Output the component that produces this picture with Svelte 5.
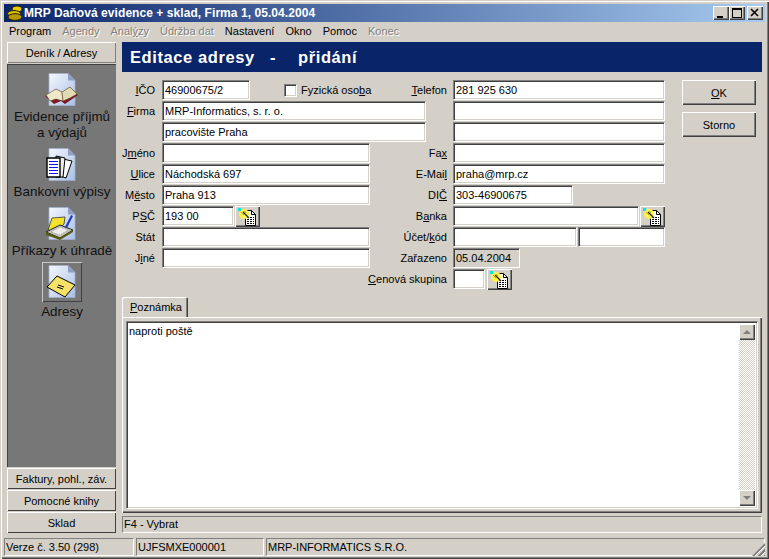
<script>
  const menu = [
    { pre: 'Program', on: true },
    { pre: 'A', u: 'g', post: 'endy' },
    { pre: 'Anal', u: 'ý', post: 'zy' },
    { pre: 'Údržba dat' },
    { pre: 'Nastavení', on: true },
    { pre: 'Okno', on: true },
    { pre: 'Pomoc', on: true },
    { pre: 'Konec' }
  ];
  const bottomTabs = ['Faktury, pohl., záv.', 'Pomocné knihy', 'Sklad'];
</script>

{#snippet doc()}
  <path d="M5 .5h19l7 7v25H5z" fill="url(#docfill)" stroke="#9fb0cc" stroke-width=".8" />
  <path d="M24 .5v7h7z" fill="#8fa0c4" />
{/snippet}

{#snippet docGrad()}
  <defs>
    <linearGradient id="docfill" x1="0" y1="0" x2="1" y2="1">
      <stop offset="0" stop-color="#f4f8fe" />
      <stop offset="1" stop-color="#a9bfe6" />
    </linearGradient>
  </defs>
{/snippet}

{#snippet lookup()}
  <svg width="19" height="18" viewBox="0 0 19 18">
    <path d="M7.500 2.500h6l4 4v11h-10z" fill="#fff" stroke="#000" />
    <path d="M13.500 2.500v4h4" fill="none" stroke="#000" />
    <path d="M9 9.500h7M9 11.500h7M9 13.500h7M9 15.500h7" stroke="#000" stroke-dasharray="2 1" />
    <circle cx="6" cy="6" r="5" fill="#fff24a" />
    <path d="M0 0h3v3H0z" fill="#00e8e8" />
    <path d="M3 4l3 3M6 3l2 2" stroke="#b0a820" />
    <path d="M5 4l6 6" stroke="#222" stroke-width="1.200" />
  </svg>
{/snippet}

<div class="window">
  <div class="titlebar">
    <svg class="appicon" width="16" height="16" viewBox="0 0 16 16">
      <ellipse cx="10" cy="4" rx="5" ry="3" fill="#e8cc00" stroke="#2a2400" />
      <ellipse cx="7" cy="8.500" rx="6.500" ry="3" fill="#dcbc00" stroke="#2a2400" />
      <ellipse cx="8" cy="12" rx="7" ry="3.300" fill="#b89a00" stroke="#2a2400" />
    </svg>
    <span class="title">MRP Daňová evidence + sklad, Firma 1, 05.04.2004</span>
    <div class="caption-btns">
      <button class="cap"><svg width="10" height="10"><path d="M1 8h6v2H1z" /></svg></button>
      <button class="cap"><svg width="10" height="10"><path d="M0 0h10v10H0zM1 2v7h8V2z" fill-rule="evenodd" /></svg></button>
      <button class="cap close"><svg width="10" height="10"><path d="M1 1l7 7M8 1L1 8" stroke="#000" stroke-width="1.600" /></svg></button>
    </div>
  </div>

  <nav class="menu">
    {#each menu as m}
      <span class="item" class:off={!m.on}>{m.pre}{#if m.u}<u>{m.u}</u>{/if}{m.post ?? ''}</span>
    {/each}
  </nav>

  <div class="body">
    <aside class="sidebar">
      <div class="tabbtn first">Deník / Adresy</div>
      <div class="shelf">
        <div class="entry">
          <svg width="36" height="34" viewBox="0 0 36 34">
            {@render docGrad()}
            {@render doc()}
            <path d="M1 23l11-7 6 3 8-5 8 8-13 9-4-3-7 3z" fill="#7a1a24" />
            <path d="M2 22l10-6 6 3 1 9-7-2-6 2z" fill="#efe9c8" stroke="#4a3a20" stroke-width=".5" />
            <path d="M18 19l8-5 7 7-7 4-7 3z" fill="#e2dcb4" stroke="#4a3a20" stroke-width=".5" />
          </svg>
          <span>Evidence příjmů<br />a výdajů</span>
        </div>
        <div class="entry">
          <svg width="36" height="34" viewBox="0 0 36 34">
            {@render docGrad()}
            {@render doc()}
            <path d="M19 11l9 2-6 17-6-2z" fill="#fff" stroke="#000" />
            <path d="M12 8l9 2-2 19h-7z" fill="#eee" stroke="#000" />
            <path d="M3 10h13v19H3z" fill="#fff" stroke="#000" stroke-width="1.400" />
            <path d="M5 13.500h9M5 16.500h9M5 19.500h9M5 22.500h9M5 25.500h9" stroke="#1010f0" />
          </svg>
          <span>Bankovní výpisy</span>
        </div>
        <div class="entry">
          <svg width="36" height="34" viewBox="0 0 36 34">
            {@render docGrad()}
            {@render doc()}
            <path d="M4 23l4-12 13-1-1 7-8 8z" fill="#f2e22c" stroke="#333" stroke-width=".8" />
            <path d="M2 25l14-7 13 5-13 8z" fill="#c4c4b4" stroke="#222" />
            <path d="M7 25l9-5 8 3-8 5z" fill="#eee" stroke="#666" stroke-width=".5" stroke-dasharray="1 1" />
            <path d="M2 25v3l14 5 13-8v-2l-13 8z" fill="#5a5a10" />
            <path d="M21 20l6-12 2 1-6 12z" fill="#1c3fc4" />
          </svg>
          <span>Příkazy k úhradě</span>
        </div>
        <div class="entry">
          <div class="picked">
            <svg width="36" height="34" viewBox="0 0 36 34">
              {@render docGrad()}
              {@render doc()}
              <path d="M3 22l10-11 18 9-10 12z" fill="#f6e266" stroke="#000" />
              <path d="M14 20l6 2M13 22l6 2" stroke="#000" />
            </svg>
          </div>
          <span>Adresy</span>
        </div>
      </div>
      {#each bottomTabs as t}
        <div class="tabbtn">{t}</div>
      {/each}
    </aside>

    <main class="content">
      <h1 class="banner"><span>Editace adresy</span><span class="dash">-</span><span>přidání</span></h1>

      <div class="upper">
        <div class="form">
          <span class="lbl"><u>I</u>ČO</span>
          <div class="span-ico">
            <div class="field ico">46900675/2</div>
            <div class="check"></div>
            <span class="chk-label">Fyzická oso<u>b</u>a</span>
          </div>
          <span class="lbl r"><u>T</u>elefon</span>
          <div class="field rf">281 925 630</div>

          <span class="lbl"><u>F</u>irma</span>
          <div class="field wide">MRP-Informatics, s. r. o.</div>
          <div class="field rf">&nbsp;</div>

          <span class="lbl"></span>
          <div class="field wide">pracovište Praha</div>
          <div class="field rf">&nbsp;</div>

          <span class="lbl">J<u>m</u>éno</span>
          <div class="field mid">&nbsp;</div>
          <span class="lbl r">Fa<u>x</u></span>
          <div class="field rf">&nbsp;</div>

          <span class="lbl"><u>U</u>lice</span>
          <div class="field mid">Náchodská 697</div>
          <span class="lbl r">E-Mai<u>l</u></span>
          <div class="field rf">praha@mrp.cz</div>

          <span class="lbl">M<u>ě</u>sto</span>
          <div class="field mid">Praha 913</div>
          <span class="lbl r">DI<u>Č</u></span>
          <div class="field rf dic">303-46900675</div>

          <span class="lbl">P<u>S</u>Č</span>
          <div class="span-mid">
            <div class="field psc">193 00</div>
            <button class="look">{@render lookup()}</button>
          </div>
          <span class="lbl r">B<u>a</u>nka</span>
          <div class="span-rf">
            <div class="field grow">&nbsp;</div>
            <button class="look">{@render lookup()}</button>
          </div>

          <span class="lbl">Stát</span>
          <div class="field mid">&nbsp;</div>
          <span class="lbl r">Účet/<u>k</u>ód</span>
          <div class="span-rf tight">
            <div class="field grow">&nbsp;</div>
            <div class="field code">&nbsp;</div>
          </div>

          <span class="lbl">J<u>i</u>né</span>
          <div class="field mid">&nbsp;</div>
          <span class="lbl r">Zařazeno</span>
          <div class="field rf readonly">05.04.2004</div>

          <span class="lbl r last"><u>C</u>enová skupina</span>
          <div class="span-rf">
            <div class="field group">&nbsp;</div>
            <button class="look">{@render lookup()}</button>
          </div>
        </div>

        <div class="actions">
          <button class="act"><u>O</u>K</button>
          <button class="act">Storno</button>
        </div>
      </div>

      <div class="tabs"><div class="tab"><u>P</u>oznámka</div></div>
      <div class="panel">
        <div class="memo">
          <div class="memo-text">naproti poště</div>
          <div class="scroll">
            <div class="sbtn"><i class="up"></i></div>
            <div class="track"></div>
            <div class="sbtn"><i class="down"></i></div>
          </div>
        </div>
      </div>
      <div class="hint">F4 - Vybrat</div>
    </main>
  </div>

  <footer class="status">
    <div class="cell a">Verze č. 3.50 (298)</div>
    <div class="cell b">UJFSMXE000001</div>
    <div class="cell c">MRP-INFORMATICS S.R.O.</div>
    <div class="grip"></div>
  </footer>
</div>

<style>
  :global(body) {
    margin: 0;
    background: #d4d0c8;
  }

  .window {
    width: 769px;
    height: 559px;
    box-sizing: border-box;
    padding: 4px 4px 3px;
    display: flex;
    flex-direction: column;
    overflow: hidden;
    background: #d4d0c8;
    color: #000;
    font: 11px "Liberation Sans", Arial, sans-serif;
    box-shadow: inset 1px 1px #d4d0c8, inset 2px 2px #fff, inset -1px -1px #404040, inset -2px -2px #808080;
  }

  .titlebar {
    height: 18px;
    flex: none;
    display: flex;
    align-items: center;
    gap: 1px;
    padding: 0 2px 0 2px;
    background: linear-gradient(90deg, #0a246a, #a6caf0);
    color: #fff;
    font-weight: 700;
    font-size: 12px;
  }

  .appicon {
    margin-left: 1px;
  }

  .title {
    flex: 1;
    white-space: nowrap;
    letter-spacing: .06px;
  }

  .caption-btns {
    display: flex;
  }

  .cap {
    width: 16px;
    height: 14px;
    padding: 0;
    display: flex;
    align-items: center;
    justify-content: center;
    background: #d4d0c8;
    border: 0;
    box-shadow: inset 1px 1px #fff, inset -1px -1px #404040, inset -2px -2px #808080;
  }

  .close {
    margin-left: 2px;
  }

  .menu {
    height: 18px;
    box-sizing: border-box;
    flex: none;
    margin-top: 1px;
    padding: 0 0 2px 5px;
    display: flex;
    gap: 11px;
    align-items: center;
  }

  .item {
    white-space: nowrap;
  }

  .off {
    color: #808080;
    text-shadow: 1px 1px #fff;
  }

  .body {
    flex: 1;
    min-height: 0;
    display: flex;
    gap: 6px;
    padding: 1px 3px 0;
  }

  .sidebar {
    width: 109px;
    flex: none;
    display: flex;
    flex-direction: column;
    gap: 1px;
  }

  .tabbtn {
    height: 21px;
    flex: none;
    display: flex;
    align-items: center;
    justify-content: center;
    box-shadow: inset 1px 1px #fff, inset -1px -1px #404040;
    white-space: nowrap;
  }

  .tabbtn.first {
    box-shadow: inset 1px 1px #fff, inset -1px -1px #808080;
  }

  .shelf {
    flex: 1;
    min-height: 0;
    background: #777;
    border-left: 1px solid #404040;
    border-top: 1px solid #404040;
    padding-top: 8px;
    display: flex;
    flex-direction: column;
    gap: 7px;
    font-size: 13.4px;
    line-height: 16px;
    color: #111;
    text-align: center;
  }

  .entry {
    display: flex;
    flex-direction: column;
    align-items: center;
    gap: 2px;
    white-space: nowrap;
  }

  .entry svg {
    display: block;
  }

  .picked {
    width: 40px;
    height: 40px;
    margin-top: -4px;
    display: flex;
    align-items: center;
    justify-content: center;
    box-shadow: inset 1px 1px #c8c8c8, inset -1px -1px #404040;
  }

  .content {
    flex: 1;
    min-width: 0;
    display: flex;
    flex-direction: column;
  }

  .banner {
    margin: 0;
    height: 30px;
    flex: none;
    display: flex;
    align-items: center;
    padding-left: 8px;
    background: #0a246a;
    color: #fff;
    font-size: 16.5px;
    font-weight: 700;
    letter-spacing: .6px;
  }

  .dash {
    margin: 0 22px 0 15px;
  }

  .upper {
    margin-top: 8px;
    display: flex;
    flex: none;
  }

  .form {
    display: grid;
    grid-template-columns: 35px 264px 17px 212px;
    grid-template-rows: repeat(10, 21px);
    column-gap: 5px;
    width: 550px;
    flex: none;
  }

  .lbl {
    text-align: right;
    line-height: 20px;
    white-space: nowrap;
    padding-right: 2px;
  }

  .form > .lbl {
    grid-column: 1;
  }

  .form > .lbl.r {
    grid-column: 3;
    justify-self: end;
    padding-right: 1px;
  }

  .form > .lbl.last {
    grid-column: 2 / 4;
    grid-row: 10;
  }

  .field {
    box-sizing: border-box;
    height: 20px;
    padding-left: 2px;
    line-height: 18px;
    background: #fff;
    white-space: nowrap;
    overflow: hidden;
    border: 1px solid;
    border-color: #808080 #fff #fff #808080;
    box-shadow: inset 1px 1px #404040, inset -1px -1px #d4d0c8;
  }

  .form > .field,
  .form > .span-ico,
  .form > .span-mid {
    grid-column: 2;
  }

  .form > .field.rf,
  .form > .span-rf {
    grid-column: 4;
  }

  .form > .field.mid {
    grid-column: 2;
    width: 208px;
  }

  .dic {
    width: 120px;
  }

  .readonly {
    width: 67px;
    background: #d4d0c8;
  }

  .span-ico,
  .span-mid,
  .span-rf {
    display: flex;
    align-items: flex-start;
  }

  .ico {
    width: 88px;
    flex: none;
  }

  .check {
    box-sizing: border-box;
    width: 13px;
    height: 13px;
    flex: none;
    margin: 4px 4px 0 34px;
    background: #fff;
    border: 1px solid;
    border-color: #808080 #fff #fff #808080;
    box-shadow: inset 1px 1px #404040, inset -1px -1px #d4d0c8;
  }

  .chk-label {
    line-height: 20px;
    white-space: nowrap;
  }

  .psc {
    width: 72px;
    flex: none;
  }

  .grow {
    flex: 1;
    min-width: 0;
  }

  .tight {
    gap: 1px;
  }

  .code {
    width: 87px;
    flex: none;
  }

  .group {
    width: 32px;
    flex: none;
    margin-right: 1px;
  }

  .look {
    width: 25px;
    height: 21px;
    flex: none;
    margin-left: 1px;
    padding: 0;
    display: flex;
    align-items: center;
    justify-content: center;
    background: #d4d0c8;
    border: 0;
    box-shadow: inset 1px 1px #fff, inset -1px -1px #404040, inset -2px -2px #808080;
  }

  .actions {
    display: flex;
    flex-direction: column;
    gap: 7px;
    margin-left: auto;
    margin-right: 6px;
  }

  .act {
    width: 74px;
    height: 25px;
    padding: 0;
    background: #d4d0c8;
    border: 0;
    color: #000;
    font: inherit;
    box-shadow: inset 1px 1px #fff, inset -1px -1px #404040, inset -2px -2px #808080;
  }

  .tabs {
    margin-top: 7px;
    height: 20px;
    flex: none;
    display: flex;
    align-items: flex-end;
  }

  .tab {
    height: 20px;
    width: 66px;
    box-sizing: border-box;
    padding-left: 8px;
    line-height: 20px;
    border-radius: 2px 2px 0 0;
    box-shadow: inset 1px 1px #fff, inset -1px 0 #404040, inset -2px 0 #808080;
  }

  .panel {
    flex: none;
    height: 196px;
    box-sizing: border-box;
    padding: 4px;
    box-shadow: inset 1px 1px #fff, inset -1px -1px #404040, inset -2px -2px #808080;
  }

  .memo {
    height: 100%;
    box-sizing: border-box;
    display: flex;
    padding: 2px 1px 2px 1px;
    background: #fff;
    border: 1px solid;
    border-color: #808080 #fff #fff #808080;
    box-shadow: inset 1px 1px #404040, inset -1px -1px #d4d0c8;
  }

  .memo-text {
    flex: 1;
    padding: 1px 1px;
  }

  .scroll {
    width: 16px;
    flex: none;
    display: flex;
    flex-direction: column;
    margin-right: 1px;
  }

  .sbtn {
    height: 16px;
    flex: none;
    display: flex;
    align-items: center;
    justify-content: center;
    background: #d4d0c8;
    box-shadow: inset 1px 1px #fff, inset -1px -1px #404040, inset -2px -2px #808080;
  }

  .sbtn i {
    width: 0;
    height: 0;
    border-left: 4px solid transparent;
    border-right: 4px solid transparent;
  }

  .up {
    border-bottom: 4px solid #808080;
  }

  .down {
    border-top: 4px solid #808080;
  }

  .track {
    flex: 1;
    background: conic-gradient(#fff 25%, #d4d0c8 0 50%, #fff 0 75%, #d4d0c8 0) 0 0 / 2px 2px;
  }

  .hint {
    margin-top: 3px;
    height: 17px;
    flex: none;
    box-sizing: border-box;
    padding-left: 1px;
    line-height: 15px;
    border: 1px solid;
    border-color: #808080 #fff #fff #808080;
  }

  .status {
    height: 18px;
    flex: none;
    margin-top: 5px;
    display: flex;
    gap: 2px;
    position: relative;
  }

  .cell {
    box-sizing: border-box;
    padding-left: 1px;
    line-height: 16px;
    white-space: nowrap;
    border: 1px solid;
    border-color: #808080 #fff #fff #808080;
  }

  .a {
    width: 130px;
  }

  .b {
    width: 128px;
  }

  .c {
    flex: 1;
  }

  .grip {
    position: absolute;
    right: 0;
    bottom: 0;
    width: 13px;
    height: 13px;
    background: repeating-linear-gradient(135deg, #d4d0c8 0 1px, #808080 1px 3px, #fff 3px 4px);
    clip-path: polygon(100% 0, 100% 100%, 0 100%);
  }
</style>
